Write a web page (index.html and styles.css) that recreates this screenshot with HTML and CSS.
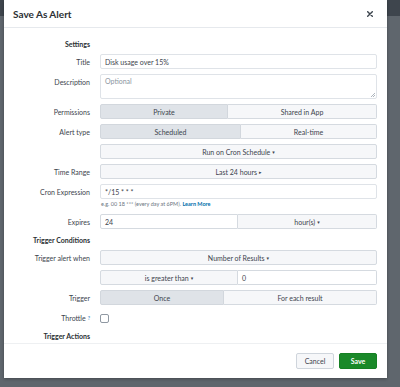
FILE: index.html
```html
<!DOCTYPE html>
<html>
<head>
<meta charset="utf-8">
<link rel="stylesheet" href="styles.css">
</head>
<body>
<div class="modal">
  <div class="header">
    <div class="title">Save As Alert</div>
    <svg class="close" width="6" height="6" viewBox="0 0 6 6"><path d="M0.7 0.7L5.3 5.3M5.3 0.7L0.7 5.3" stroke="#3c444d" stroke-width="1.4" stroke-linecap="round"/></svg>
  </div>
  <div class="body">
    <div class="form">
      <div class="heading">Settings</div><div></div>

      <div class="label">Title</div>
      <div class="input">Disk usage over 15%</div>

      <div class="label top">Description</div>
      <div class="input area"><span class="ph">Optional</span>
        <svg class="grip" width="5" height="5" viewBox="0 0 5 5"><path d="M1 5L5 1M3 5L5 3" stroke="#9aa3ad" stroke-width="0.8"/></svg>
      </div>

      <div class="label">Permissions</div>
      <div class="seg seg-perm"><div class="opt on">Private</div><div class="opt">Shared in App</div></div>

      <div class="label">Alert type</div>
      <div class="seg seg-type"><div class="opt on">Scheduled</div><div class="opt">Real-time</div></div>

      <div></div>
      <div class="btn">Run on Cron Schedule <span class="caret">▾</span></div>

      <div class="label">Time Range</div>
      <div class="btn">Last 24 hours <span class="caret">▸</span></div>

      <div class="label">Cron Expression</div>
      <div class="stack">
        <div class="input">*/15 * * *</div>
        <div class="hint">e.g. 00 18 *** (every day at 6PM). <span class="link">Learn More</span></div>
      </div>

      <div class="label">Expires</div>
      <div class="seg seg-half"><div class="input flat">24</div><div class="opt">hour(s) <span class="caret">▾</span></div></div>

      <div class="heading">Trigger Conditions</div><div></div>

      <div class="label">Trigger alert when</div>
      <div class="btn">Number of Results <span class="caret">▾</span></div>

      <div></div>
      <div class="seg seg-half"><div class="opt">is greater than <span class="caret">▾</span></div><div class="input flat">0</div></div>

      <div class="label">Trigger</div>
      <div class="seg seg-trig"><div class="opt on">Once</div><div class="opt">For each result</div></div>

      <div class="label">Throttle <sup class="q">?</sup></div>
      <div class="checkrow"><div class="check"></div></div>

      <div class="heading">Trigger Actions</div><div></div>
    </div>
  </div>
  <div class="footer">
    <div class="button cancel">Cancel</div>
    <div class="button save">Save</div>
  </div>
</div>
</body>
</html>
```

FILE: styles.css
```css
html, body {
  margin: 0;
  padding: 0;
}
body {
  width: 400px;
  height: 387px;
  overflow: hidden;
  background: linear-gradient(#3e454d 0, #3e454d 16px, #5f666d 16px);
  font-family: Lato, "Liberation Sans", sans-serif;
  color: #3c444d;
}
.modal {
  margin-left: 4px;
  width: 383px;
  height: 378px;
  background: #fff;
  display: flex;
  flex-direction: column;
  box-shadow: 0 1px 3px rgba(0,0,0,0.3);
}
.header {
  height: 27px;
  flex: none;
  border-bottom: 1px solid #e6e9ed;
  display: flex;
  align-items: center;
  justify-content: space-between;
  padding: 0 14px 0 9px;
}
.title {
  font-size: 10px;
  font-weight: 700;
  color: #2b3033;
  padding-top: 1px;
}
.close {
  display: block;
}
.body {
  flex: 1;
  overflow: hidden;
  padding-top: 10px;
  border-bottom: 1px solid #eef0f2;
}
.form {
  display: grid;
  grid-template-columns: 86px 1fr;
  column-gap: 10px;
  row-gap: 5px;
  padding-right: 10px;
  font-size: 7px;
}
.label {
  text-align: right;
  display: flex;
  align-items: center;
  justify-content: flex-end;
  height: 15px;
  color: #3c444d;
}
.label.top {
  align-items: flex-start;
  padding-top: 4px;
  height: auto;
}
.heading {
  text-align: right;
  font-weight: 700;
  height: 11px;
  line-height: 13px;
  color: #2b3033;
}
.input {
  box-sizing: border-box;
  height: 15px;
  border: 1px solid #dfe3e8;
  border-radius: 2px;
  background: #fff;
  padding: 0 4px;
  display: flex;
  align-items: center;
  color: #3c444d;
}
.input.area {
  height: 25px;
  align-items: flex-start;
  padding-top: 2px;
  position: relative;
}
.ph {
  color: #8a949e;
}
.grip {
  position: absolute;
  right: 1px;
  bottom: 1px;
}
.seg {
  display: grid;
  height: 15px;
}
.seg-perm { grid-template-columns: 128fr 149fr; }
.seg-type { grid-template-columns: 141fr 136fr; }
.seg-half { grid-template-columns: 138fr 139fr; }
.seg-trig { grid-template-columns: 124fr 153fr; }
.opt, .btn {
  box-sizing: border-box;
  height: 15px;
  border: 1px solid #d5dae0;
  background: #f6f7f9;
  display: flex;
  align-items: center;
  justify-content: center;
  color: #3c444d;
}
.seg > :first-child {
  border-radius: 2px 0 0 2px;
}
.seg > :last-child {
  border-radius: 0 2px 2px 0;
  border-left: none;
}
.input.flat {
  border-color: #d5dae0;
}
.opt.on {
  background: #dfe3e8;
  border-color: #d2d7dd;
}
.btn {
  border-radius: 2px;
}
.caret {
  font-family: "DejaVu Sans", sans-serif;
  font-size: 5px;
  margin-left: 2px;
}
.stack {
  display: flex;
  flex-direction: column;
}
.hint {
  height: 10px;
  line-height: 10px;
  font-size: 5.5px;
  color: #6b7580;
  padding-left: 1px;
}
.link {
  color: #006eaa;
  font-weight: 700;
}
.q {
  color: #4a90c8;
  font-size: 5px;
  margin-left: 2px;
  vertical-align: 4px;
  font-weight: 700;
}
.checkrow {
  height: 15px;
  display: flex;
  align-items: center;
}
.check {
  box-sizing: border-box;
  width: 9px;
  height: 9px;
  border: 1px solid #8f98a2;
  border-radius: 2px;
  background: #fff;
  margin-top: 2px;
}
.footer {
  height: 34px;
  flex: none;
  display: flex;
  align-items: center;
  justify-content: flex-end;
  gap: 5px;
  padding-right: 10px;
}
.button {
  box-sizing: border-box;
  width: 38px;
  height: 16px;
  border-radius: 2px;
  display: flex;
  align-items: center;
  justify-content: center;
  font-size: 7px;
}
.cancel {
  background: #f6f7f9;
  border: 1px solid #cfd5dc;
  color: #3c444d;
}
.save {
  background: #1a8929;
  border: 1px solid #168024;
  color: #fff;
  font-weight: 700;
}
```
